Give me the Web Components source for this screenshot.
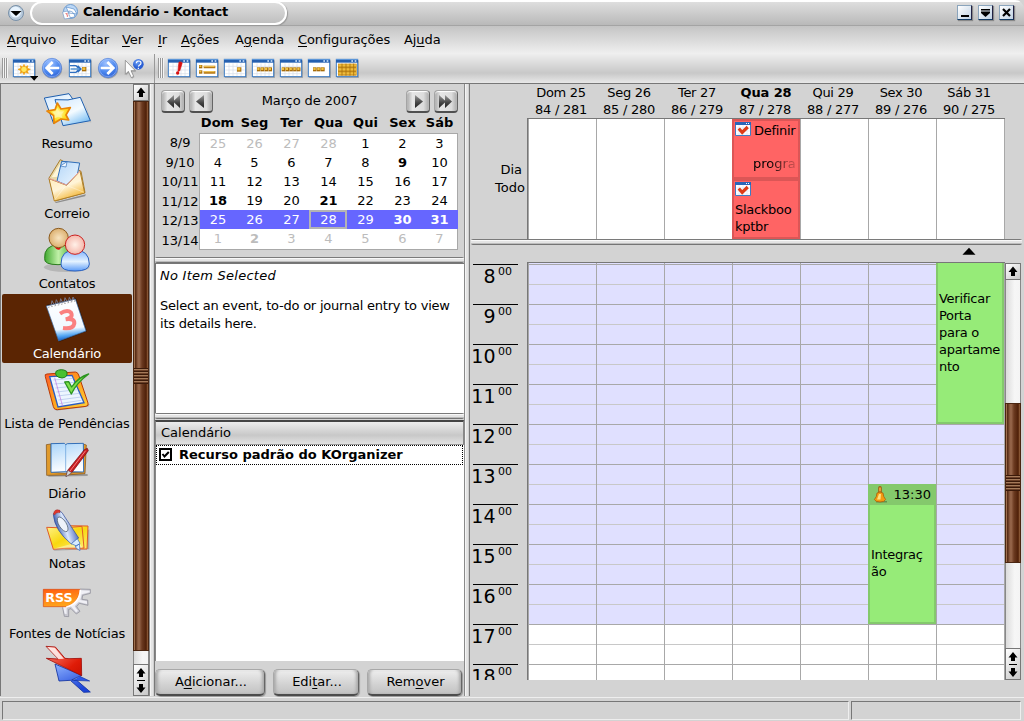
<!DOCTYPE html>
<html lang="pt-BR">
<head>
<meta charset="utf-8">
<title>Calendário - Kontact</title>
<style>
html,body{margin:0;padding:0}
body{width:1024px;height:721px;overflow:hidden;background:#d3d3d3;color:#000;font:13px/16px "DejaVu Sans",Verdana,sans-serif}
</style>
</head>
<body>
<kt-window></kt-window>
<script>
const define = (tag, css, html) => customElements.define(tag, class extends HTMLElement {
  constructor() { super(); this.attachShadow({mode: 'open'}); }
  connectedCallback() {
    this.shadowRoot.innerHTML = `<style>*{box-sizing:border-box}${css}</style>` + (typeof html === 'function' ? html(this) : html);
  }
});

/* ---------- icons ---------- */
const calGlyph = (x, inner) => `
  <rect x="${x+3}" y="181" width="66" height="53" fill="#0003"/>
  <rect x="${x+1}" y="178" width="64" height="52" fill="#fff" stroke="#3d7cc4" stroke-width="3"/>
  <path d="M${x+4} 199h58M${x+4} 210h58M${x+4} 221h58M${x+15} 190v38M${x+27} 190v38M${x+39} 190v38M${x+51} 190v38" stroke="#d4dce8" stroke-width="2"/>
  <rect x="${x}" y="177" width="66" height="11" fill="#2560b0"/><rect x="${x}" y="177" width="66" height="3" fill="#5b95d8"/>
  <path d="M${x+46} 181h5v4h-5zM${x+56} 181h5v4h-5z" fill="#d9ecff"/>${inner}`;
const gold = (x, y, w, h) => `<rect x="${x}" y="${y}" width="${w}" height="${h}" fill="#a86c08"/><rect x="${x+1}" y="${y+1}" width="${w-4}" height="${h-5}" fill="#f0c040"/>`;
const golds = (x, y, n, p) => Array.from({length: n}, (_, i) => gold(x + i*p, y, p - 1, 12)).join('');
const ball = (cx, arrow) => `<defs><radialGradient id="b" cx=".4" cy=".25" r=".8"><stop offset="0" stop-color="#9fc2ff"/><stop offset=".6" stop-color="#4a86ee"/><stop offset="1" stop-color="#2a5cd0"/></radialGradient></defs>
  <circle cx="${cx+1}" cy="207" r="30" fill="#0003"/><circle cx="${cx}" cy="204" r="29" fill="url(#b)" stroke="#5a86d8" stroke-width="2"/><circle cx="${cx}" cy="204" r="26" fill="none" stroke="#b4ceff" stroke-width="1.5"/><path d="${arrow}" fill="none" stroke="#fff" stroke-width="8"/>`;
const toolIcons = {
  new: [30, calGlyph(39, `<path d="M72 193l4 8 8-4-2 8 9 3-9 4 3 8-9-3-4 7-4-7-8 3 3-8-9-4 9-3-3-8 8 4z" fill="#f0a010" stroke="#f0a010" stroke-width="2"/><circle cx="72" cy="208" r="8" fill="#ffe860"/><path d="M90 228h25l-12.500 14z" fill="#000"/>`)],
  back: [114, ball(156, 'M178 204H140M158 186L140 204l18 18')],
  today: [198, calGlyph(207, `<path d="M210 197h18l10 10-10 10h-18M212 207h30M233 197l10 10-10 10" fill="none" stroke="#2f6fc0" stroke-width="4"/><path d="M210 207h28" stroke="#b4e2f8" stroke-width="2"/>${gold(246,201,13,13)}`)],
  fwd: [282, ball(324, 'M302 204h38M322 186l18 18-18 18')],
  help: [366, `<defs><radialGradient id="q" cx=".4" cy=".3"><stop offset="0" stop-color="#6da0f4"/><stop offset="1" stop-color="#2a5fd4"/></radialGradient></defs><path d="M378 184v42l10-8 8 18 7-4-8-17h14z" fill="#888" opacity=".5"/><path d="M376 181v42l9-9 9 19 7-4-8-17h13z" fill="#fdfdfd" stroke="#777" stroke-width="2"/><circle cx="415" cy="193" r="16" fill="url(#q)"/><path d="M409 190q0-7 7-7t7 6q0 4-4 6t-3 5M415 203v4" fill="none" stroke="#fff" stroke-width="3.500"/>`],
  next: [495, calGlyph(504, `<path d="M537 186q12-1 9 5l-7 22-5 1q1-16 3-28z" fill="#d81010" stroke="#d81010" stroke-width="2"/><circle cx="533" cy="219" r="5" fill="#d81010"/>`)],
  agenda: [579, calGlyph(588, `<rect x="592" y="190" width="58" height="38" fill="#fff"/>${gold(597,195,10,10)}${gold(597,211,10,10)}<path d="M611 201h35M611 217h35" stroke="#b87a14" stroke-width="8"/><path d="M611 199h33M611 215h33" stroke="#f4cc60" stroke-width="3"/>`)],
  day: [663, calGlyph(672, gold(711,202,13,13))],
  work: [747, calGlyph(756, golds(771,202,4,11.5))],
  week: [831, calGlyph(840, golds(845,202,5,11.5))],
  three: [915, calGlyph(924, `<rect x="928" y="190" width="58" height="38" fill="#fff"/>` + golds(939,202,3,12))],
  month: [999, calGlyph(1008, `<rect x="1014" y="191" width="56" height="36" fill="#c08818"/><path d="M1015 196h54M1015 208h54M1015 220h54" stroke="#f0bc3c" stroke-width="7"/><path d="M1026 191v36M1038 191v36M1050 191v36M1061 191v36" stroke="#a8700c" stroke-width="2.500"/>`)]
};
define('kt-tool', ':host{display:block;width:28px;height:29px}svg{display:block}', el => {
  const [x, body] = toolIcons[el.getAttribute('name')];
  return `<svg width="28" height="29" viewBox="${x} 162 84 87">${body}</svg>`;
});

const sideIcons = {
  summary: [0, `<defs><linearGradient id="p" x1="0" y1="0" x2=".6" y2="1"><stop offset="0" stop-color="#cfe6ff"/><stop offset=".6" stop-color="#f4fbff"/><stop offset="1" stop-color="#86c4f4"/></linearGradient><radialGradient id="s"><stop offset="0" stop-color="#fffbb0"/><stop offset=".6" stop-color="#ffe22a"/><stop offset="1" stop-color="#ffc010"/></radialGradient></defs>
    <path d="M190 129l84-14-20-62 18 62z" fill="#0003"/><path d="M133 42l74-13 14 20-60 70z" fill="url(#p)" stroke="#1f5fae" stroke-width="3"/><path d="M165 47q40 5 76-7l30 70-82 15z" fill="url(#p)" stroke="#1f5fae" stroke-width="3"/>
    <path d="M172 57l11 18 28-4-13 22 8 15-23-3-21 13-1-23-20-14 24-4z" fill="url(#s)" stroke="#e88408" stroke-width="5" stroke-linejoin="round"/><path d="M172 72l6 11 14-1-8 10 3 9-13-3-10 5 0-12-8-8 11-1z" fill="#fff8b0" opacity=".7"/>`],
  mail: [210, `<defs><linearGradient id="m" x1="0" y1="0" x2=".5" y2="1"><stop offset="0" stop-color="#ffe8b0"/><stop offset=".6" stop-color="#fff4d8"/><stop offset="1" stop-color="#f4b93c"/></linearGradient><linearGradient id="l" x1="0" x2="1" y2="1"><stop offset="0" stop-color="#b4d6f8"/><stop offset="1" stop-color="#eef7ff"/></linearGradient></defs>
    <path d="M164 355l94-24-3 6-86 20z" fill="#0005"/><path d="M147 282l34-55 62 35 12 64-90 25z" fill="#e8d9a8" stroke="#a87c2c" stroke-width="3"/><path d="M155 280l29-46 50 40z" fill="#fff6d8"/><path d="M185 232l16 1 38 4-8 40-32 26-28-12z" fill="url(#l)" stroke="#2f6db8" stroke-width="3"/><path d="M201 233l-3 16-17-3z" fill="#f2f8ff" stroke="#2f6db8" stroke-width="2"/>
    <path d="M147 284l53 20 40-43 14 66-91 24z" fill="url(#m)" stroke="#b08028" stroke-width="3"/><path d="M147 283l53 20 41-43" fill="none" stroke="#e8a0a0" stroke-width="3"/><path d="M164 347l30-38M252 325l-50-20" stroke="#fff8" stroke-width="2"/>`],
  contacts: [420, `<defs><linearGradient id="g" x1="0" x2="1"><stop offset="0" stop-color="#3fa82e"/><stop offset=".5" stop-color="#c0f0a8"/><stop offset="1" stop-color="#4db038"/></linearGradient><linearGradient id="u" y2="1" x2="0"><stop offset="0" stop-color="#7db2ff"/><stop offset=".55" stop-color="#e4f2ff"/><stop offset="1" stop-color="#5c9cf8"/></linearGradient><radialGradient id="h"><stop offset="0" stop-color="#f8e4c0"/><stop offset="1" stop-color="#dcb070"/></radialGradient><radialGradient id="r"><stop offset="0" stop-color="#fff0e8"/><stop offset="1" stop-color="#f4b8ac"/></radialGradient></defs>
    <ellipse cx="200" cy="550" rx="68" ry="14" fill="#0002"/><path d="M134 524q-3-40 42-42 40 0 40 40 0 20-42 20t-40-18z" fill="url(#g)" stroke="#2c7c20" stroke-width="3"/><path d="M162 487q14 22 24-2z" fill="#e01010"/><circle cx="176" cy="462" r="29" fill="url(#h)" stroke="#8c5a1c" stroke-width="3"/>
    <path d="M183 540q0-42 42-42t43 42q0 21-43 21t-42-21z" fill="url(#u)" stroke="#2b62c0" stroke-width="3"/><circle cx="225" cy="482" r="29" fill="url(#r)" stroke="#cc2020" stroke-width="3"/>`],
  calendar: [12, `<defs><linearGradient id="c" y2="1" x2=".1"><stop offset="0" stop-color="#fff"/><stop offset=".75" stop-color="#f0f8ff"/><stop offset=".9" stop-color="#5cacf4"/><stop offset="1" stop-color="#1c6cd0"/></linearGradient></defs>
    <path d="M140 44l88-20 33 100-84 32z" fill="#0006"/><path d="M139 48l87-21 32 96-82 30z" fill="url(#c)" stroke="#3c6ca8" stroke-width="2"/><path d="M144 52l82-19" stroke="#777" stroke-width="2" stroke-dasharray="5 5"/><path d="M153 47l3-15 6 12M166 44l3-15 6 12M179 41l3-15 6 12M192 38l3-15 6 12M205 35l3-13 6 12M216 32l3-11 5 10" fill="none" stroke="#778" stroke-width="3"/>
    <path d="M180 71q22-14 33-3 8 15-16 20 27-4 26 12-3 18-34 14" fill="none" stroke="#fa8080" stroke-width="12"/>`],
  todo: [222, `<defs><linearGradient id="t" x2="1" y2="1"><stop offset="0" stop-color="#ff5a2c"/><stop offset=".5" stop-color="#ffa21c"/><stop offset="1" stop-color="#ffd23c"/></linearGradient></defs>
    <path d="M167 362l98-12 4-8-96 8z" fill="#0003"/><path d="M141 252q-8 0-5 8l24 90q2 10 12 9l86-10q9-2 6-10l-28-84q-3-9-10-9z" fill="url(#t)" stroke="#b83a08" stroke-width="3"/><path d="M149 260l67-4 36 82-78 13z" fill="#edf5ff" stroke="#2a5cc0" stroke-width="4"/><path d="M160 270l60-5M163 282l60-5M166 294l62-6M169 306l64-7M172 318l66-8M175 330l68-9M178 341l66-10" stroke="#aabfe8" stroke-width="2"/><path d="M164 263l24 86" stroke="#c070e0" stroke-width="2"/><path d="M168 244q16-10 32 0 6 18-14 20-24-3-18-20z" fill="#48c030" stroke="#1c7c14" stroke-width="3"/>
    <path d="M194 276l12-1 9 16q20-30 51-39-36 26-52 60z" fill="#7ee04c" stroke="#2c9420" stroke-width="4" stroke-linejoin="round"/>`],
  journal: [432, `<defs><linearGradient id="j" y2="1" x2=".3"><stop offset="0" stop-color="#a8d4fa"/><stop offset="1" stop-color="#fff"/></linearGradient></defs>
    <path d="M145 560l118-2v-6H145z" fill="#0004"/><path d="M139 464l14-2 1 85 42 3 52-5 1-83 10 3-4 86-58 4-57 1z" fill="#e09a2c" stroke="#7c4a10" stroke-width="2"/><path d="M153 461l40-1 4 4 5-3 48-1 1 86-53-1-45 2z" fill="url(#j)" stroke="#3470b8" stroke-width="3"/><path d="M197 464v84" stroke="#5c98d8" stroke-width="2"/>
    <path d="M253 479l9-4 3 7-48 64-19 14 5-19z" fill="#c81c20" stroke="#6c0c10" stroke-width="2"/><path d="M257 482l-47 61" stroke="#f48080" stroke-width="3"/><path d="M198 560l5-19 12 7z" fill="#d8d8d8" stroke="#555" stroke-width="1.500"/>`],
  notes: [12, `<defs><linearGradient id="n" x2="1" y2="1"><stop offset="0" stop-color="#fff28c"/><stop offset=".5" stop-color="#f8d810"/><stop offset="1" stop-color="#ffee70"/></linearGradient><linearGradient id="k" x1=".1" y1=".6" x2=".9" y2=".3"><stop offset="0" stop-color="#2c50a8"/><stop offset=".45" stop-color="#dce8fc"/><stop offset="1" stop-color="#3a58b4"/></linearGradient></defs>
    <path d="M160 152l108-4v-60z" fill="#0003"/><path d="M195 77l69 1-3 69-66-1z" fill="url(#n)" stroke="#e05c28" stroke-width="3"/><path d="M140 82q50 5 106-3l6 65q-50-2-92 4z" fill="url(#n)" stroke="#e05c28" stroke-width="3"/><path d="M160 146l76-20 12 18z" fill="#fff" opacity=".4"/>
    <path d="M160 44q8-22 26-6l50 76-22 18q-50-40-54-88z" fill="url(#k)" stroke="#2c4898" stroke-width="2"/><ellipse cx="188" cy="73" rx="11" ry="25" transform="rotate(-32 188 73)" fill="#eef2fa" stroke="#456" stroke-width="2"/><path d="M160 42q4-18 20-11v7q-10-2-17 7z" fill="#e0382c" stroke="#801010"/><path d="M214 131l18-15 8 14-10 8zM226 138l12-6 2 20-12-8z" fill="#d8ecff" stroke="#3468c0" stroke-width="2"/>`],
  rss: [222, `<defs><linearGradient id="o" y2="1" x2=".3"><stop offset="0" stop-color="#ff5c10"/><stop offset="1" stop-color="#ffa41c"/></linearGradient></defs>
    <path d="M240 267l31 1v12l-23 6-2 12 17 2 1 16-26-6-8 10 10 14-11 8-16-16-7 2 0 22-13-1-5-26 30-22z" fill="#c8c8d0" stroke="#888894" stroke-width="2"/><path d="M243 271l26 1v5l-24 6-4 17 20 4v8l-25-6-12 13 10 14-6 4-16-18-12 3v20l-6-1-5-22" fill="#f0f0f6"/><path d="M130 268h110q-3 42-42 52h-68z" fill="url(#o)" stroke="#d84810" stroke-width="2"/><path d="M241 269q-2 41-42 52" fill="none" stroke="#fff" stroke-width="5"/>
    <text x="136" y="306" font-family="DejaVu Sans" font-weight="bold" font-size="38" letter-spacing="0" fill="#fff">RSS</text>`],
  plugin: [432, `<defs><linearGradient id="e" x2="1" y2="1"><stop offset="0" stop-color="#ff9080"/><stop offset=".7" stop-color="#e01c08"/><stop offset="1" stop-color="#c81000"/></linearGradient><linearGradient id="w" x2=".5" y2="1"><stop offset="0" stop-color="#90b4ff"/><stop offset="1" stop-color="#1c44d8"/></linearGradient></defs>
    <path d="M165 492l80 34-30 14 14 0 42 36-20 1-40-36-34 2z" fill="url(#w)" stroke="#1030a0" stroke-width="2.500"/><path d="M221 541l48 2-30-14" fill="#2c58e8" stroke="#1030a0" stroke-width="2"/><path d="M138 439l28 2 29 34 12 1 37-1 1 52-106-52 36 2z" fill="url(#e)" stroke="#a00c08" stroke-width="2.500"/><path d="M142 441l22 2 28 33-17 1z" fill="#fff" opacity=".8"/>`]
};
define('kt-module', `
:host{display:block;height:70px;padding:0 1px}
.b{height:69px;display:flex;flex-direction:column;align-items:center}
:host([selected]) .b{background:#5b2503;color:#fff;border-radius:2px}
svg{display:block;flex:none}.t{white-space:nowrap;height:16px;line-height:16px;letter-spacing:-.18px}`,
 el => { const [y, body] = sideIcons[el.getAttribute('icon')];
  return `<div class="b"><svg width="56" height="52" viewBox="117 ${y} 168 156">${body}</svg><div class="t"><slot></slot></div></div>`; });

/* ---------- scrollbar ---------- */
define('kt-scroll', `
:host{display:flex;flex-direction:column;flex:none;width:16px;background:linear-gradient(90deg,#888 0 1px,#dcdcdc 1px,#f6f6f6 60%,#f4f4f4 15px,#888 15px)}
.btn{flex:none;height:17px;border:1px solid #777;background:linear-gradient(135deg,#fff,#c8c8c8)}
.dbl{height:32px}.btn svg{display:block;margin:auto}
.gap{flex:none;height:var(--gap,0px)}
.thumb{flex:none;height:var(--thumb);border:1px solid #4a2612;background:linear-gradient(90deg,#a0714f 0 1px,#5a2f18 1px 2px,#7f4f34 3px,#9a6a4e 5px,#6b3a20 8px,#4f210a 12px,#6b3818 13px,#a0714f 14px);display:flex;align-items:center}
.grip{width:100%;height:16px;background:repeating-linear-gradient(#3b1a0a 0 1px,#a47a5a 1px 2px,#6b4028 2px 3px)}
.rest{flex:1}`, `
<div class="btn"><svg width="14" height="15" viewBox="0 0 14 15"><path d="M7 2.500L11.500 8H9v4H5V8H2.500z"/></svg></div>
<div class="gap"></div><div class="thumb"><div class="grip"></div></div><div class="rest"></div>
<div class="btn dbl"><svg width="14" height="30" viewBox="0 0 14 30"><path d="M7 3L11.500 8.500H9V12H5V8.500H2.500zM3 15h8v1H3zM7 28L2.500 22.500H5V19h4v3.500h2.500z"/></svg></div>`);

/* ---------- splitters ---------- */
define('kt-split', `
:host{display:block;flex:none}
:host([v]){width:6px;background:linear-gradient(90deg,#8a8a8a 0 1px,#f4f4f4 1px 2px,#e4e4e4 2px 4px,#cfcfcf 4px 5px,#7a7a7a 5px)}
:host([h]){height:6px;border-radius:2px;background:linear-gradient(#7a7a7a 0 1px,#f8f8f8 1px 2px,#e4e4e4 2px 4px,#bcbcbc 4px 5px,#747474 5px)}`, '');

/* ---------- push buttons ---------- */
define('kt-button', `
:host{display:block;height:27px;line-height:23px;text-align:center;border-radius:5px;border:1px solid #a8a8a8;border-bottom:2px solid #4c4c4c;border-right-color:#666;padding-left:2px;
background:linear-gradient(#eee,#d2d2d2 60%,#c2c2c2);box-shadow:inset 3px 0 3px -1px #aaa,inset -3px 0 3px -1px #aaa,inset 0 1px 1px #fff,1px 1px 1px #999;white-space:nowrap}
::slotted(u){text-underline-offset:2px}`, '<slot></slot>');
define('kt-nav', `
:host{display:block;width:24px;height:23px;border-radius:4px;border:1px solid #a4a4a4;border-right-color:#666;border-bottom:2px solid #505050;background:linear-gradient(90deg,#aaa,#e6e6e6 25%,#dcdcdc 75%,#aaa);box-shadow:inset 0 1px 1px #fff}svg{display:block}`,
 el => { const p = {first:'M12 4v13L5 10.500zM18 4v13l-7-6.500z', prev:'M14 4v13L6 10.500z', next:'M8 4v13l8-6.500z', last:'M4 4v13l7-6.500zM10 4v13l7-6.500z'}[el.getAttribute('dir')];
  return `<svg width="22" height="20" viewBox="0 0 22 20"><defs><linearGradient id="a" x2="0" y2="1"><stop offset="0" stop-color="#999"/><stop offset=".6" stop-color="#444"/><stop offset="1" stop-color="#222"/></linearGradient></defs><path d="${p}" fill="url(#a)"/></svg>`; });

/* ---------- title bar ---------- */
define('kt-title', `
:host{display:flex;height:26px;position:relative;background:linear-gradient(#fff 0 2px,#dedede 2px,#b9b9b9 25px,#a4a4a4 25px);border-radius:0 9px 0 0;font-weight:bold;align-items:flex-start}
.menu{margin:5px 7px 0 8px}
.tab{width:257px;height:24px;margin-top:1px;margin-left:-1px;border:2px solid #fff;border-radius:13px;background:linear-gradient(#dedede,#c0c0c0);box-shadow:1px 1px 1px #999;display:flex;padding-left:30px}
.tab svg{margin-top:1px;margin-right:5px}.tab span{line-height:18px;letter-spacing:-.26px}
.w{display:flex;gap:6px;margin:5px 10px 0 auto}
.w svg{display:block;width:15px;height:15px;background:linear-gradient(135deg,#fff,#c0d2e4);border:1px solid #8aa4bc;border-right-color:#224;border-bottom-color:#123c66;box-shadow:1px 1px 1px #888}`, `
<svg class="menu" width="16" height="16" viewBox="0 0 16 16"><circle cx="8" cy="8" r="7.500" fill="#b8cadc" stroke="#7890a8"/><circle cx="7.500" cy="7" r="5.500" fill="#e8f4ff"/><path d="M2.500 6h11L8 11z"/></svg>
<div class="tab"><svg width="16" height="16" viewBox="0 0 16 16"><circle cx="8.500" cy="7.500" r="7" fill="#bcd8f6" stroke="#6f9cd0"/><path d="M4 3l8 2 3 5-8-1zM7 7q5 0 6 6l-7 1z" fill="#fff" stroke="#5a8cc8" stroke-width=".7"/><path d="M.5 8l5-1 3 7-6 1z" fill="#fff" stroke="#7a9cc8" stroke-width=".7"/><path d="M3.500 9.500l2 .2-1 1.300 1.500.5-1 1.500" fill="none" stroke="#e88080"/></svg><span>Calendário - Kontact</span></div>
<div class="w"><svg viewBox="0 0 13 13"><path d="M3 9h8v2H3z"/></svg><svg viewBox="0 0 13 13"><path d="M2 3h9v1.500H2zM2 5.500h9v1.500L6.500 11 2 7z"/></svg><svg viewBox="0 0 13 13"><path d="M3 3l7 7M10 3l-7 7" stroke="#000" stroke-width="2.200"/></svg></div>`);

define('kt-menubar', `
:host{display:grid;grid-template-columns:64px 51px 36px 23px 54px 63px 106px auto;height:28px;padding-left:7px;line-height:27px;letter-spacing:-.08px;background:linear-gradient(#c4c4c4,#f0f0f0)}u{text-underline-offset:2px}`,
 '<span><u>A</u>rquivo</span><span><u>E</u>ditar</span><span><u>V</u>er</span><span><u>I</u>r</span><span><u>A</u>ções</span><span>A<u>g</u>enda</span><span><u>C</u>onfigurações</span><span>Aj<u>u</u>da</span>');

define('kt-toolbar', `
:host{display:flex;height:30px;background:linear-gradient(#eee,#c8c8c8 19px,#e8e8e8 29px,#777 29px)}
.g{width:6px;height:20px;margin:4px 2px 0;background:repeating-linear-gradient(90deg,#999 0 1px,#f4f4f4 1px 2px)}
.s{width:1px;background:#999;margin:0 1px 0 4px;height:29px}.s+.g{margin:4px 1px 0 2px}`,
 `<div class="g"></div>${['new','back','today','fwd','help'].map(n => `<kt-tool name="${n}"></kt-tool>`).join('')}<div class="s"></div><div class="g"></div>${['next','agenda','day','work','week','three','month'].map(n => `<kt-tool name="${n}"></kt-tool>`).join('')}`);

/* ---------- sidebar ---------- */
define('kt-sidebar', `
:host{display:flex;flex:none;width:149px;height:612px;border-left:1px solid #777;overflow:hidden}
.l{width:132px;height:612px;overflow:hidden}
kt-scroll{--thumb:550px}`, `
<div class="l"><kt-module icon="summary">Resumo</kt-module><kt-module icon="mail">Correio</kt-module><kt-module icon="contacts">Contatos</kt-module><kt-module icon="calendar" selected>Calendário</kt-module><kt-module icon="todo">Lista de Pendências</kt-module><kt-module icon="journal">Diário</kt-module><kt-module icon="notes">Notas</kt-module><kt-module icon="rss">Fontes de Notícias</kt-module><kt-module icon="plugin"></kt-module></div>
<kt-scroll></kt-scroll>`);

/* ---------- date navigator ---------- */
const weeks = [['8/9','-25 -26 -27 -28 1 2 3'],['9/10','4 5 6 7 8 *9 10'],['10/11','11 12 13 14 15 16 17'],['11/12','*18 19 20 *21 22 23 24'],['12/13','25 26 27 28 29 *30 *31'],['13/14','-1 -*2 -3 -4 -5 -6 -7']];
define('kt-datenav', `
:host{display:block;height:173px;padding:6px 0 0 6px}
.n{display:flex;width:297px;height:23px;gap:4px}.n b{flex:1;font-weight:normal;text-align:center;line-height:22px;letter-spacing:-.1px}
.h{display:grid;grid-template-columns:repeat(7,37px);margin-left:38px;font-weight:bold;text-align:center;line-height:20px;height:20px}
.m{display:flex}.k{width:38px;text-align:center;padding-top:1px;flex:none;letter-spacing:-.1px}.k div{height:19.500px;line-height:18px}
.g{width:259px;height:117px;background:#fff;border:1px solid #a8a8a8;display:flex;flex-direction:column}
.r{display:grid;grid-template-columns:36px repeat(6,37px);height:19px;line-height:19px;text-align:center}
.r.s{background:#6666ff;color:#fff;width:258px}
.o{color:#bcbcbc}.b{font-weight:bold}.t{outline:2px solid #b4b4b4;outline-offset:-2px;margin-left:-1px;padding-left:1px}`, () => `
<div class="n"><kt-nav dir="first"></kt-nav><kt-nav dir="prev"></kt-nav><b>Março de 2007</b><kt-nav dir="next"></kt-nav><kt-nav dir="last"></kt-nav></div>
<div class="h">${['Dom','Seg','Ter','Qua','Qui','Sex','Sáb'].map(d => `<span>${d}</span>`).join('')}</div>
<div class="m"><div class="k">${weeks.map(w => `<div>${w[0]}</div>`).join('')}</div><div class="g">${weeks.map((w, i) => `<div class="r ${i == 4 ? 's' : ''}">${w[1].split(' ').map(d => `<span class="${d.includes('-') ? 'o' : ''} ${d.includes('*') ? 'b' : ''} ${i == 4 && d == '28' ? 't' : ''}">${d.replace(/[-*]/g, '')}</span>`).join('')}</div>`).join('')}</div></div>`);

define('kt-details', `
:host{display:block;height:150px;background:#fff;padding:3px 0 0 4px;border-left:1px solid #777;border-top:1px solid #777}
p{margin:0 0 12px;line-height:18px;letter-spacing:-.22px;white-space:nowrap}i{letter-spacing:.25px}`, '<p><i>No Item Selected</i></p><p>Select an event, to-do or journal entry to view<br>its details here.</p>');

define('kt-resources', `
:host{display:block}
.h{height:25px;line-height:21px;border:1px solid #888;border-top:2px solid #444;border-bottom:1px solid #999;padding-left:5px;background:linear-gradient(#ececec,#c8c8c8 60%,#e2e2e2)}
.l{height:216px;background:#fff;border-left:1px solid #888}
.i{display:flex;width:307px;height:20px;line-height:17px;border:1px dotted #000;font-weight:bold;padding-left:2px}
.i svg{margin:2px 7px 0 0;flex:none}
.f{display:flex;padding-top:8px}kt-button:nth-child(1){width:110px}kt-button:nth-child(2){width:86px;margin:0 8px}kt-button:nth-child(3){width:95px}`, `
<div class="h">Calendário</div><div class="l"><div class="i"><svg width="13" height="13" viewBox="0 0 13 13"><rect x="1" y="1" width="11" height="11" fill="#fff" stroke="#000" stroke-width="2"/><path d="M3.500 6L5.500 8.500 9.800 4" fill="none" stroke="#000" stroke-width="2"/></svg><span>Recurso padrão do KOrganizer</span></div></div>
<div class="f"><kt-button>A<u>d</u>icionar...</kt-button><kt-button>Edi<u>t</u>ar...</kt-button><kt-button>Rem<u>o</u>ver</kt-button></div>`);

/* ---------- agenda ---------- */
define('kt-todo-icon', ':host{display:block;width:16px;height:15px}svg{display:block}', `<svg width="16" height="15" viewBox="0 0 16 15"><path d="M.5.500h15v13H.5z" fill="#fff" stroke="#3d7cc4"/><path d="M0 0h16v3H0z" fill="#2a66b8"/><path d="M11 1h1v1h-1zM13 1h1v1h-1z" fill="#fff"/><path d="M1 6h14M1 9h14M1 12h14M4 3v10M8 3v10M12 3v10" stroke="#dde4f0" stroke-width=".6"/><path d="M3.800 6.500l3.400 4 5.500-5.500" fill="none" stroke="#dc3c18" stroke-width="3.200"/></svg>`);
define('kt-event', `
:host{display:block;border:2px solid #84c96c;background:#96eb78;overflow:hidden;line-height:17px;white-space:pre;letter-spacing:-.28px}
:host([kind=todo]){background:#ff6464;border-color:#dc5656}`, '<slot></slot>');
const days = [['Dom 25','84 / 281'],['Seg 26','85 / 280'],['Ter 27','86 / 279'],['Qua 28','87 / 278'],['Qui 29','88 / 277'],['Sex 30','89 / 276'],['Sáb 31','90 / 275']];
define('kt-agenda', `
:host{display:block;flex:1;min-width:0}
.d{display:grid;grid-template-columns:repeat(7,68px);margin-left:57px;height:34px;text-align:center;line-height:17px;letter-spacing:-.28px}
.d b{display:block;letter-spacing:-.1px;padding-left:2px}
.a{display:flex;height:121px}
.lab{width:57px;text-align:right;padding:43px 2px 0 0;line-height:18px}.lab div:first-child{padding-right:3px}
.allday{width:478px;border-left:1px solid #777;border-top:1px solid #777;display:grid;grid-template-columns:repeat(7,68px) 1px;grid-template-rows:60px 60px;background:repeating-linear-gradient(90deg,#a8a8a8 0 1px,#fff 1px 68px)}
.allday kt-event{grid-column:4}
.row{display:flex}.row span{margin:1px 0 0 3px}.row kt-todo-icon{margin:1px 0 0 1px}
.fade{padding-left:19px;margin-top:16px;-webkit-mask:linear-gradient(90deg,#000 34px,#0003 60px);mask:linear-gradient(90deg,#000 34px,#0003 60px);letter-spacing:0}
.in{padding-left:1px}
kt-split{width:551px;margin:0 0 0 1px}
.mark{height:17px}.mark svg{display:block;margin-left:491px;padding-top:2px}
.b{display:flex;height:418px}
.hrs{width:57px;height:418px;overflow:hidden;padding:2px 0 0 3px;flex:none}
.hr{height:40px;width:45px;border-top:1px solid #000;display:flex}
.hr b{font-weight:normal;width:25px;font-size:19px;line-height:23px;letter-spacing:.3px;margin-left:-1px;padding-right:1px;display:flex;justify-content:flex-end;flex:none}
.hr i{font-style:normal;font-size:11px;line-height:14px;letter-spacing:-.1px;margin-left:1px}
.g{width:478px;height:418px;overflow:hidden;border-left:1px solid #777;border-top:1px solid #777;display:grid;grid-template-columns:repeat(7,68px) 1px;grid-template-rows:1px repeat(21,20px);
background:repeating-linear-gradient(90deg,#a8a8a8 0 1px,transparent 1px 68px),repeating-linear-gradient(#a8a8a8 0 1px,transparent 1px 20px,#c8c8c8 20px 21px,transparent 21px 40px) 0 1px,linear-gradient(#e0e0ff 0 361px,#fff 361px)}
kt-scroll{--gap:123px;--thumb:160px;margin-top:1px}
.eh{background:#84c96c;height:19px;display:flex;justify-content:space-between;padding:0 3px 0 3px;letter-spacing:0}`, () => `
<div class="d">${days.map((d, i) => `<div>${i == 3 ? `<b>${d[0]}</b>` : d[0] + '<br>'}${d[1]}</div>`).join('')}</div>
<div class="a"><div class="lab"><div>Dia</div><div>Todo</div></div><div class="allday">
<kt-event kind="todo"><div class="row"><kt-todo-icon></kt-todo-icon><span>Definir</span></div><div class="fade">progra</div></kt-event>
<kt-event kind="todo"><div class="row"><kt-todo-icon></kt-todo-icon></div><div class="in" style="margin-top:4px">Slackboo
kptbr</div></kt-event></div></div>
<kt-split h></kt-split>
<div class="mark"><svg width="16" height="11" viewBox="0 0 16 11"><path d="M8 1l8 8.500H0z"/></svg></div>
<div class="b"><div class="hrs">${[8,9,10,11,12,13,14,15,16,17,18].map(h => `<div class="hr"><b>${h}</b><i>00</i></div>`).join('')}</div>
<div class="g"><kt-event style="grid-area:13/6/20/7"><div class="eh"><svg width="14" height="17" viewBox="0 0 14 17"><path d="M3 15h11v1.500H3z" fill="#0004"/><path d="M7 1.800v6" stroke="#a05c10" stroke-width="3.600" stroke-linecap="round"/><path d="M7 1.500v4" stroke="#f4b040" stroke-width="1.600"/><path d="M4 7q3-2 6 0 .3 4 2.600 6.500-1 2.500-5.600 2.500T1.400 13.500Q3.800 11 4 7z" fill="#f49a10" stroke="#a8600c" stroke-width=".8"/><path d="M6 8l-2 5.500h3.500L8 8z" fill="#ffe080"/></svg><span>13:30</span></div><div class="in" style="margin-top:41px">Integraç
ão</div></kt-event>
<kt-event style="grid-area:1/7/10/8;border-top:0"><div class="in" style="margin-top:27px">Verificar
Porta
para o
apartame
nto</div></kt-event></div><kt-scroll></kt-scroll></div>`);

define('kt-status', `
:host{display:flex;height:24px;border-top:1px solid #eee;padding:3px 3px 1px 2px;gap:2px}
div{border:1px solid #777;border-right-color:#eee;border-bottom-color:#eee}.a{flex:1}.b{width:170px}`, '<div class="a"></div><div class="b"></div>');

define('kt-window', `
:host{display:flex;flex-direction:column;width:1024px;height:721px;background:#d3d3d3}
main{display:flex;height:613px}main>kt-split{height:612px}
.mid{width:309px;flex:none}.mid kt-split+kt-resources{margin-top:1px}`, `
<kt-title></kt-title><kt-menubar></kt-menubar><kt-toolbar></kt-toolbar>
<main><kt-sidebar></kt-sidebar><kt-split v></kt-split>
<div class="mid"><kt-datenav></kt-datenav><kt-split h></kt-split><kt-details></kt-details><kt-split h></kt-split><kt-resources></kt-resources></div>
<kt-split v></kt-split><kt-agenda></kt-agenda></main>
<kt-status></kt-status>`);
</script>
</body>
</html>
